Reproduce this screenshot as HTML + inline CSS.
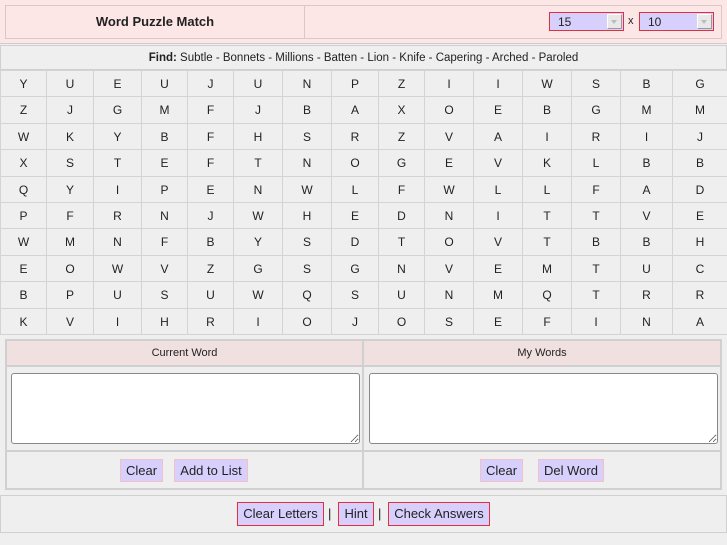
<!DOCTYPE html><html><head><style>
*{box-sizing:border-box;margin:0;padding:0}
body{width:727px;height:545px;background:#efefef;font-family:"Liberation Sans",sans-serif;color:#222;position:relative;overflow:hidden}
.a{position:absolute}
.btn{position:absolute;background:#d8d0fc;border:1px solid #f4c0c8;font-size:13px;text-align:center;line-height:21px;color:#222}
.btn.r{border:1px solid #e03040;line-height:22px}
.cell{position:absolute;border:1px solid #d4d4d4;font-size:12px;text-align:center;color:#222}
.sel{position:absolute;background:#d8d0fc;border:1px solid #e03040;font-size:12px;height:19px;line-height:18px;padding-left:8px}
.sel i{position:absolute;right:1px;top:1px;width:15px;height:15px;background:#e8e8e8;border:1px solid #999;border-top-color:#fff;border-left-color:#fff}
.sel i:after{content:"";position:absolute;left:3px;top:5px;border:3px solid transparent;border-top:4px solid #bbb}
textarea{position:absolute;background:#fff;border:1px solid #888;border-radius:3px;resize:both}
</style></head><body>
<div class="a" style="left:0;top:0;width:727px;height:44px;background:#fde6e6;border-bottom:1px solid #ccc"></div>
<div class="a" style="left:5px;top:5px;width:300px;height:34px;border:1px solid #d8c8c8;font-weight:bold;font-size:13px;line-height:31px;text-align:center">Word Puzzle Match</div>
<div class="a" style="left:304px;top:5px;width:418px;height:34px;border:1px solid #d8c8c8"></div>
<div class="sel" style="left:549px;top:12px;width:75px">15<i></i></div>
<div class="a" style="left:628px;top:15px;font-size:11px">x</div>
<div class="sel" style="left:639px;top:12px;width:75px">10<i></i></div>
<div class="a" style="left:0;top:45px;width:727px;height:25px;border:1px solid #d0d0d0;font-size:11.5px;text-align:center;line-height:24px"><b>Find:</b> Subtle - Bonnets - Millions - Batten - Lion - Knife - Capering - Arched - Paroled</div>
<div id="g"></div>
<div class="a" style="left:5px;top:339px;width:717px;height:151px;border:1px solid #d0d0d0"></div>
<div class="a" style="left:6px;top:340px;width:357px;height:26px;background:#f0e0e0;border:1px solid #d0d0d0;font-size:11px;text-align:center;line-height:24px">Current Word</div>
<div class="a" style="left:363px;top:340px;width:358px;height:26px;background:#f0e0e0;border:1px solid #d0d0d0;font-size:11px;text-align:center;line-height:24px">My Words</div>
<div class="a" style="left:6px;top:366px;width:357px;height:85px;border:1px solid #d0d0d0"></div>
<div class="a" style="left:363px;top:366px;width:358px;height:85px;border:1px solid #d0d0d0"></div>
<div class="a" style="left:6px;top:451px;width:357px;height:38px;border:1px solid #d0d0d0"></div>
<div class="a" style="left:363px;top:451px;width:358px;height:38px;border:1px solid #d0d0d0"></div>
<textarea style="left:11px;top:373px;width:349px;height:71px"></textarea>
<textarea style="left:369px;top:373px;width:349px;height:71px"></textarea>
<div class="btn" style="left:120px;top:459px;width:43px;height:23px">Clear</div>
<div class="btn" style="left:174px;top:459px;width:74px;height:23px">Add to List</div>
<div class="btn" style="left:480px;top:459px;width:43px;height:23px">Clear</div>
<div class="btn" style="left:538px;top:459px;width:66px;height:23px">Del Word</div>
<div class="a" style="left:0;top:495px;width:727px;height:38px;border:1px solid #d0d0d0"></div>
<div class="btn r" style="left:237px;top:502px;width:87px;height:24px">Clear Letters</div>
<div class="a" style="left:328px;top:506px;font-size:13px">|</div>
<div class="btn r" style="left:338px;top:502px;width:36px;height:24px">Hint</div>
<div class="a" style="left:378px;top:506px;font-size:13px">|</div>
<div class="btn r" style="left:388px;top:502px;width:102px;height:24px">Check Answers</div>
<script>
var L=["YUEUJUNPZIIWSBG","ZJGMFJBAXOEBGMM","WKYBFHSRZVAIRIJ","XSTEFTNOGEVKLBB","QYIPENWLFWLLFAD","PFRNJWHEDNITTVE","WMNFBYSDTOVTBBH","EOWVZGSGNVEMTUC","BPUSUWQSUNMQTRR","KVIHRIOJOSEFINA"];
var xs=[0,46,93,141,187,233,282,331,378,424,473,522,571,620,672,727];
var h="";
for(var r=0;r<10;r++){var y=70+r*26.4;for(var c=0;c<15;c++){h+='<div class="cell" style="left:'+xs[c]+'px;top:'+y+'px;width:'+(xs[c+1]-xs[c]+1)+'px;height:27.4px;line-height:26px">'+L[r][c]+'</div>';}}
document.getElementById("g").innerHTML=h;
</script>
</body></html>
